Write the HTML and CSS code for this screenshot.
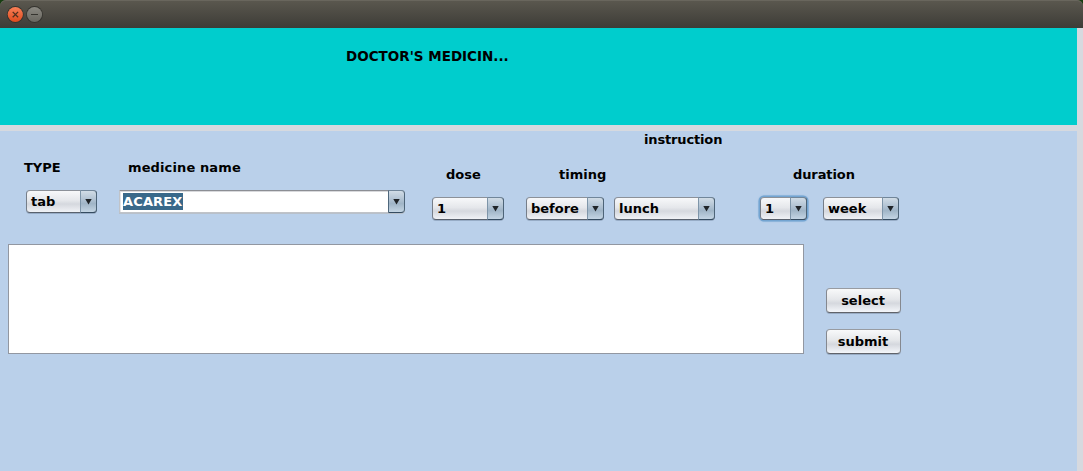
FILE: index.html
```html
<!DOCTYPE html>
<html lang="en">
<head>
<meta charset="utf-8">
<title>Doctor's Medicine</title>
<link rel="stylesheet" href="styles.css">
</head>
<body>
<div class="window">
  <header class="titlebar">
    <svg class="winbtn" width="18" height="18" viewBox="0 0 18 18"><defs><linearGradient id="oc" x2="0" y2="1"><stop stop-color="#f88058"/><stop offset="1" stop-color="#df4b1d"/></linearGradient></defs><circle cx="9.3" cy="8.5" r="8.4" fill="#34332e"/><circle cx="9.3" cy="8.5" r="7.6" fill="url(#oc)"/><path d="M6.7 5.9l5.4 5.4M12.1 5.9l-5.4 5.4" stroke="#50301f" stroke-width="1.3"/></svg>
    <svg class="winbtn" width="18" height="18" viewBox="0 0 18 18"><defs><linearGradient id="gm" x2="0" y2="1"><stop stop-color="#8b8982"/><stop offset="1" stop-color="#686760"/></linearGradient></defs><circle cx="9.5" cy="8.5" r="8.4" fill="#34332e"/><circle cx="9.5" cy="8.5" r="7.6" fill="url(#gm)"/><path d="M6 8.5h7" stroke="#35342f" stroke-width="1"/></svg>
  </header>
  <div class="content">
    <section class="banner"><h1 class="heading">DOCTOR'S MEDICIN...</h1></section>
    <main class="form">
      <div class="instruction">instruction</div>
      <div class="fields">
        <div class="field type">
          <span class="label">TYPE</span>
          <div class="combo"><span class="value">tab</span><span class="arrow"></span></div>
        </div>
        <div class="field medicine">
          <span class="label">medicine name</span>
          <div class="combo editable"><span class="value"><span class="selected">ACAREX</span></span><span class="arrow"></span></div>
        </div>
        <div class="field low dose">
          <span class="label">dose</span>
          <div class="combo"><span class="value">1</span><span class="arrow"></span></div>
        </div>
        <div class="field low timing">
          <span class="label">timing</span>
          <div class="pair">
            <div class="combo when"><span class="value">before</span><span class="arrow"></span></div>
            <div class="combo meal"><span class="value">lunch</span><span class="arrow"></span></div>
          </div>
        </div>
        <div class="field low duration">
          <span class="label">duration</span>
          <div class="pair">
            <div class="combo count focused"><span class="value">1</span><span class="arrow"></span></div>
            <div class="combo unit"><span class="value">week</span><span class="arrow"></span></div>
          </div>
        </div>
      </div>
      <div class="bottom">
        <div class="list"></div>
        <div class="actions"><button class="button">select</button><button class="button">submit</button></div>
      </div>
    </main>
  </div>
</div>
</body>
</html>
```
FILE: styles.css
```css
* { box-sizing: border-box; }
body {
  margin: 0;
  background: #173e12;
  font: bold 13px/15px "DejaVu Sans", sans-serif;
  color: #000;
  overflow: hidden;
}
.window { display: flex; flex-direction: column; height: 471px; }
.titlebar {
  display: flex;
  gap: 1px;
  height: 28px;
  padding: 6px 0 0 6px;
  border-radius: 6px 6px 0 0;
  background: linear-gradient(#5b584f, #3d3c37);
  box-shadow: inset 0 1px #69665d;
}
.winbtn { display: block; }
.content {
  flex: 1;
  display: flex;
  flex-direction: column;
  gap: 6px;
  padding-right: 6px;
  background: #d6d9df;
}
.banner { height: 97px; padding: 20px 0 0 346px; background: #00cdcd; }
.heading { margin: 0; font-size: 13.5px; line-height: 16px; white-space: nowrap; }
.form { flex: 1; padding-top: 1px; background: #bad0ea; }
.instruction { height: 15px; padding-left: 644px; letter-spacing: -.15px; }
.fields { display: flex; padding: 13px 0 0 26px; height: 97px; }
.field { display: flex; flex-direction: column; gap: 15px; }
.low { padding-top: 7px; }
.label { white-space: nowrap; }
.type { width: 71px; margin-right: 22px; }
.type .label { margin-left: -2px; }
.medicine { width: 286px; margin-right: 27px; }
.medicine .label { padding-left: 9px; letter-spacing: .12px; }
.dose { width: 72px; margin-right: 22px; }
.dose .label { padding-left: 14px; }
.timing { width: 189px; margin-right: 45px; }
.timing .label { padding-left: 33px; }
.duration { width: 139px; }
.duration .label { padding-left: 33px; letter-spacing: -.1px; }
.pair { display: flex; justify-content: space-between; }
.when { width: 78px; }
.meal { width: 101px; }
.count { width: 47px; }
.unit { width: 76px; }
.combo {
  display: flex;
  height: 23px;
  border-radius: 4px;
  border: 1px solid;
  border-color: #8c9199 #5d6875 #59616d #767e89;
  background: linear-gradient(#f7f8fa, #e5e7eb 45%, #d5d8de 62%, #f0f2f6);
  box-shadow: 0 1px rgba(70, 90, 115, .3);
}
.value { flex: 1; padding: 3px 0 0 4px; white-space: nowrap; }
.arrow {
  display: flex;
  align-items: center;
  justify-content: center;
  width: 17px;
  margin: -1px;
  border: 1px solid;
  border-color: #71869a #4d6478 #344b60 #6d8499;
  border-left-color: #7e95a9;
  border-radius: 0 4px 4px 0;
  background: linear-gradient(#d1dce6, #adbfd0 45%, #a0b5c7 60%, #c4d5e4);
}
.arrow::before {
  content: "";
  width: 7px;
  height: 6px;
  background: #202428;
  clip-path: polygon(0 0, 100% 0, 50% 100%);
}
.editable {
  border-color: #8c8e94 #c0c3c8 #c0c3c8;
  border-radius: 0 4px 4px 0;
  background: #fff;
  box-shadow: inset 0 1px #d8d9dc, inset 1px 0 #e4e5e8, 0 1px #b8c0ca;
}
.editable .value { padding: 2px 0 0 3px; }
.editable .arrow { border-left-color: #4e677c; }
.selected { display: inline-block; width: 60px; height: 17px; padding-top: 1px; background: #39698a; color: #fff; letter-spacing: .15px; }
.focused { box-shadow: 0 0 0 1.5px #73a4d1, 0 0 2px 1px #73a4d1; }
.bottom { display: flex; gap: 22px; padding: 0 0 0 8px; }
.list { width: 796px; height: 110px; border: 1px solid #9297a1; background: #fff; }
.actions { display: flex; flex-direction: column; gap: 16px; padding-top: 44px; }
.button {
  width: 75px;
  height: 25px;
  padding: 0 1px 0 0;
  border: 1px solid;
  border-color: #989ba1 #85888f #60636a;
  border-radius: 4px;
  background: linear-gradient(#f8f9fa, #e5e7ea 45%, #d5d8de 62%, #f4f6fa);
  box-shadow: 0 1px rgba(75, 90, 110, .3);
  font: inherit;
  color: inherit;
}
```
